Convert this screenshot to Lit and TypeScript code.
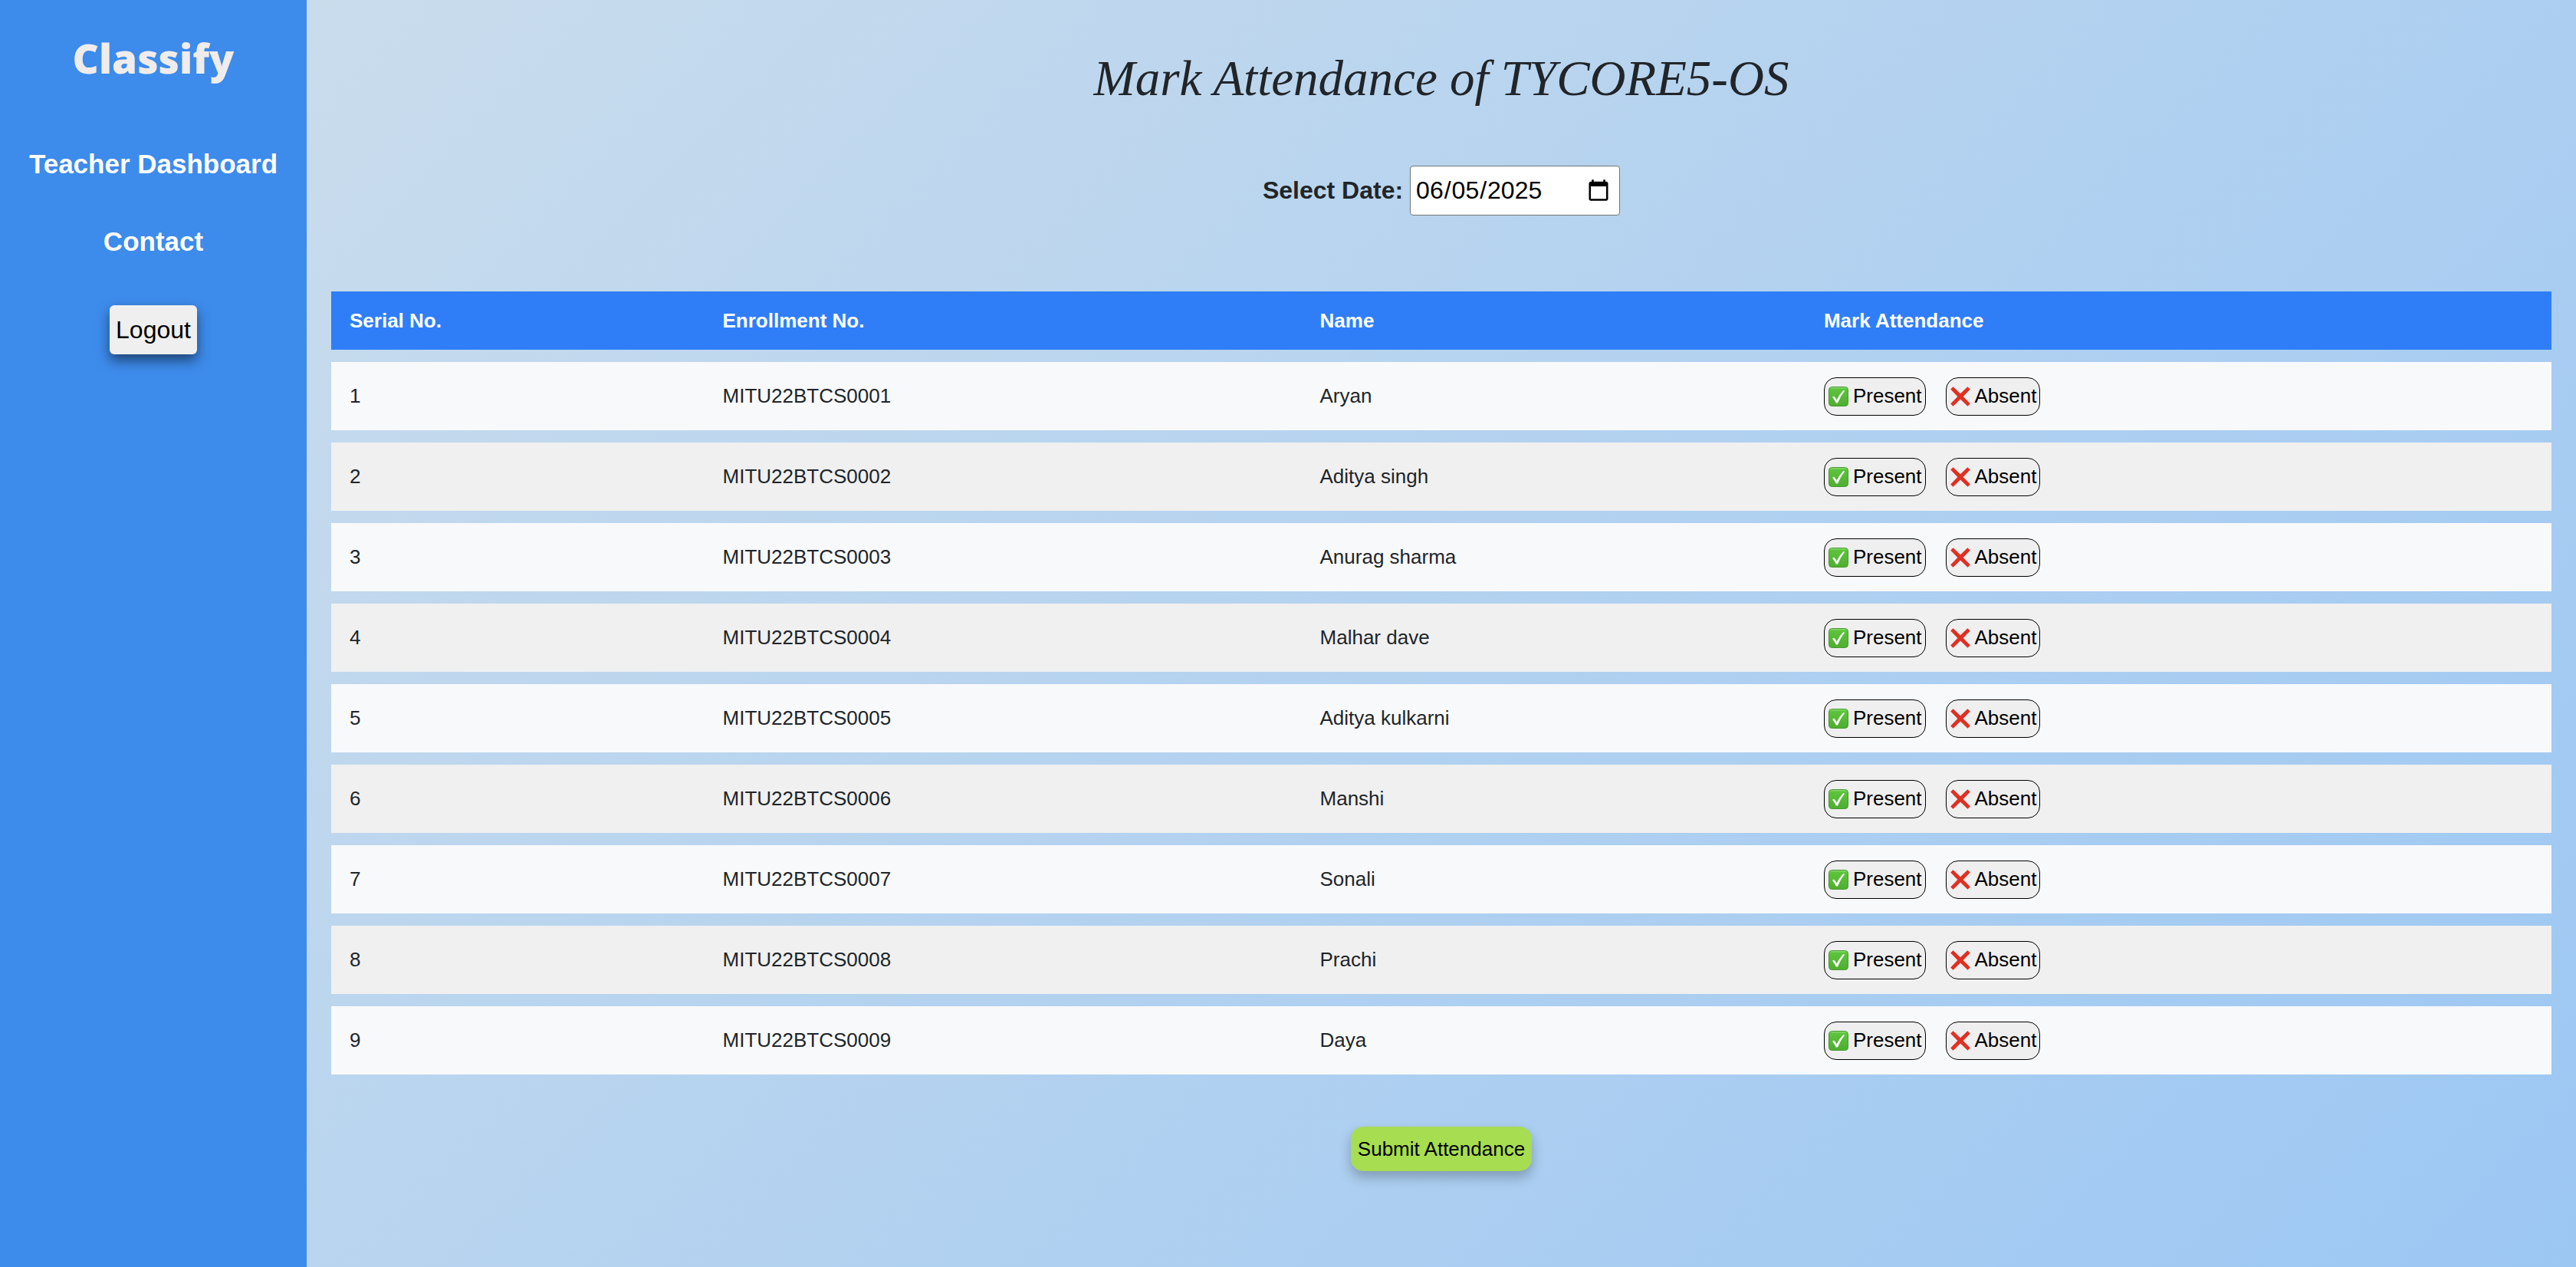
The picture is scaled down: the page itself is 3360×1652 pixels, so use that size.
import { LitElement, html, css, svg } from "lit";
import { customElement, state } from "lit/decorators.js";

interface Student {
  enrollment: string;
  name: string;
}

type Mark = "present" | "absent";

const STUDENTS: Student[] = [
  "Aryan",
  "Aditya singh",
  "Anurag sharma",
  "Malhar dave",
  "Aditya kulkarni",
  "Manshi",
  "Sonali",
  "Prachi",
  "Daya",
].map((name, i) => ({ enrollment: `MITU22BTCS000${i + 1}`, name }));

@customElement("side-bar")
export class SideBar extends LitElement {
  static styles = css`
    :host {
      display: flex;
      flex-direction: column;
      align-items: center;
      box-sizing: border-box;
      background: #3d8beb;
      padding-top: 40px;
      font-family: "Liberation Sans", Arial, sans-serif;
    }
    .brand {
      font-family: "Gill Sans Ultra Bold", "Open Sans", sans-serif;
      font-weight: 800;
      font-size: 53px;
      line-height: 72px;
      color: #f0eceb;
    }
    .nav {
      display: flex;
      flex-direction: column;
      align-items: center;
      gap: 61px;
      margin: 82px 0 63px;
    }
    .link {
      color: #fff;
      text-decoration: none;
      font-weight: 700;
      font-size: 35px;
      line-height: 40px;
    }
    .logout {
      font: 32px "Liberation Sans", Arial, sans-serif;
      height: 64px;
      padding: 0 8px;
      border: 0;
      border-radius: 6px;
      background: #efefef;
      color: #000;
      box-shadow: 0 8px 16px rgba(0, 0, 0, 0.5);
    }
  `;

  render() {
    return html`
      <div class="brand">Classify</div>
      <nav class="nav">
        <a class="link" href="#dashboard">Teacher Dashboard</a>
        <a class="link" href="#contact">Contact</a>
      </nav>
      <button class="logout" type="button">Logout</button>
    `;
  }
}

@customElement("app-root")
export class AppRoot extends LitElement {
  static styles = css`
    :host {
      display: flex;
      min-height: 100vh;
      font-family: "Liberation Sans", Arial, sans-serif;
      font-size: 26px;
      color: #212529;
    }
    .side {
      flex: 0 0 400px;
    }
    .main {
      flex: 1;
      min-width: 0;
      display: flex;
      flex-direction: column;
      align-items: center;
      padding: 60px 32px;
      background: linear-gradient(135deg, #c9dcec, #9cc7f3);
    }
    .title {
      margin: 0;
      font-family: "Apple Chancery", "Liberation Serif", serif;
      font-style: italic;
      font-weight: 400;
      font-size: 65px;
      line-height: 84px;
    }
    .date {
      display: flex;
      align-items: center;
      gap: 9px;
      margin: 72px 0 83px;
      font-size: 32px;
    }
    .date-label {
      font-weight: 700;
    }
    .date-input {
      box-sizing: border-box;
      width: 274px;
      height: 65px;
      padding: 0 9px 0 6px;
      border: 1px solid #767676;
      border-radius: 4px;
      background: #fff;
      color: #000;
      font: 32px "Liberation Sans", Arial, sans-serif;
    }
    .roster {
      width: 100%;
      border-collapse: separate;
      border-spacing: 0 16px;
    }
    .col-serial {
      width: 16.8%;
    }
    .col-enrollment {
      width: 26.9%;
    }
    .col-name {
      width: 22.7%;
    }
    .head {
      height: 76px;
      padding: 0 24px;
      background: #2f7ef8;
      color: #fff;
      text-align: left;
      font-weight: 700;
    }
    .cell {
      height: 89px;
      padding: 0 24px;
      background: #f8f9fb;
      white-space: nowrap;
    }
    .row:nth-child(even) .cell {
      background: #f0f0f0;
    }
    .marks {
      display: flex;
      gap: 26px;
    }
    .mark {
      display: flex;
      align-items: center;
      gap: 5px;
      height: 50px;
      padding: 0 4px;
      border: 1px solid #000;
      border-radius: 16px;
      background: #efefef;
      color: #000;
      font: 26px "Liberation Sans", Arial, sans-serif;
    }
    .icon {
      width: 28px;
      height: 28px;
    }
    .submit {
      height: 58px;
      margin-top: 52px;
      padding: 0 9px;
      border: 0;
      border-radius: 16px;
      background: #a7dd50;
      color: #000;
      font: 26px "Liberation Sans", Arial, sans-serif;
      box-shadow: 0 8px 16px rgba(0, 0, 0, 0.25);
    }
  `;

  @state() private marks: Record<string, Mark> = {};

  private setMark(id: string, mark: Mark) {
    this.marks = { ...this.marks, [id]: mark };
  }

  private checkIcon() {
    return html`<svg class="icon" viewBox="0 0 28 28" aria-hidden="true">
      ${svg`
        <defs>
          <linearGradient id="g" x1="0" y1="0" x2="0" y2="1">
            <stop offset="0" stop-color="#9be084"></stop>
            <stop offset="0.12" stop-color="#5cc43c"></stop>
            <stop offset="1" stop-color="#4fae30"></stop>
          </linearGradient>
        </defs>
        <rect x="1.5" y="1.5" width="25" height="25" rx="4" fill="url(#g)" stroke="#459b30"></rect>
        <path d="M6 14.8 L8.2 13.6 Q10.3 15.8 11.6 18.6 Q15.2 11.2 20.2 6.2 L22.2 6.6 Q16.6 13.6 13 22.6 L10.9 22.6 Q8.8 18 6 14.8 Z" fill="#fff"></path>
      `}
    </svg>`;
  }

  private crossIcon() {
    return html`<svg class="icon" viewBox="0 0 28 28" aria-hidden="true">
      ${svg`<path d="M4.6 1.2 L14 10.3 L23.4 1.2 L26.8 4.6 L17.6 14 L26.8 23.2 L23.6 26.8 L14 17.6 L4.6 26.8 L1.2 23.4 L10.4 14 L1.2 4.6 Z" fill="#df3022"></path>`}
    </svg>`;
  }

  render() {
    return html`
      <side-bar class="side"></side-bar>
      <main class="main">
        <h1 class="title">Mark Attendance of TYCORE5-OS</h1>
        <div class="date">
          <label class="date-label" for="day">Select Date:</label>
          <input class="date-input" id="day" type="date" value="2025-06-05" />
        </div>
        <table class="roster">
          <colgroup>
            <col class="col-serial" />
            <col class="col-enrollment" />
            <col class="col-name" />
            <col />
          </colgroup>
          <thead>
            <tr>
              <th class="head" scope="col">Serial No.</th>
              <th class="head" scope="col">Enrollment No.</th>
              <th class="head" scope="col">Name</th>
              <th class="head" scope="col">Mark Attendance</th>
            </tr>
          </thead>
          <tbody>
            ${STUDENTS.map(
              (s, i) => html`<tr class="row">
                <td class="cell">${i + 1}</td>
                <td class="cell">${s.enrollment}</td>
                <td class="cell">${s.name}</td>
                <td class="cell">
                  <div class="marks">
                    <button
                      class="mark"
                      type="button"
                      aria-pressed=${this.marks[s.enrollment] === "present"}
                      @click=${() => this.setMark(s.enrollment, "present")}
                    >${this.checkIcon()}Present</button>
                    <button
                      class="mark"
                      type="button"
                      aria-pressed=${this.marks[s.enrollment] === "absent"}
                      @click=${() => this.setMark(s.enrollment, "absent")}
                    >${this.crossIcon()}Absent</button>
                  </div>
                </td>
              </tr>`
            )}
          </tbody>
        </table>
        <button class="submit" type="button">Submit Attendance</button>
      </main>
    `;
  }
}
